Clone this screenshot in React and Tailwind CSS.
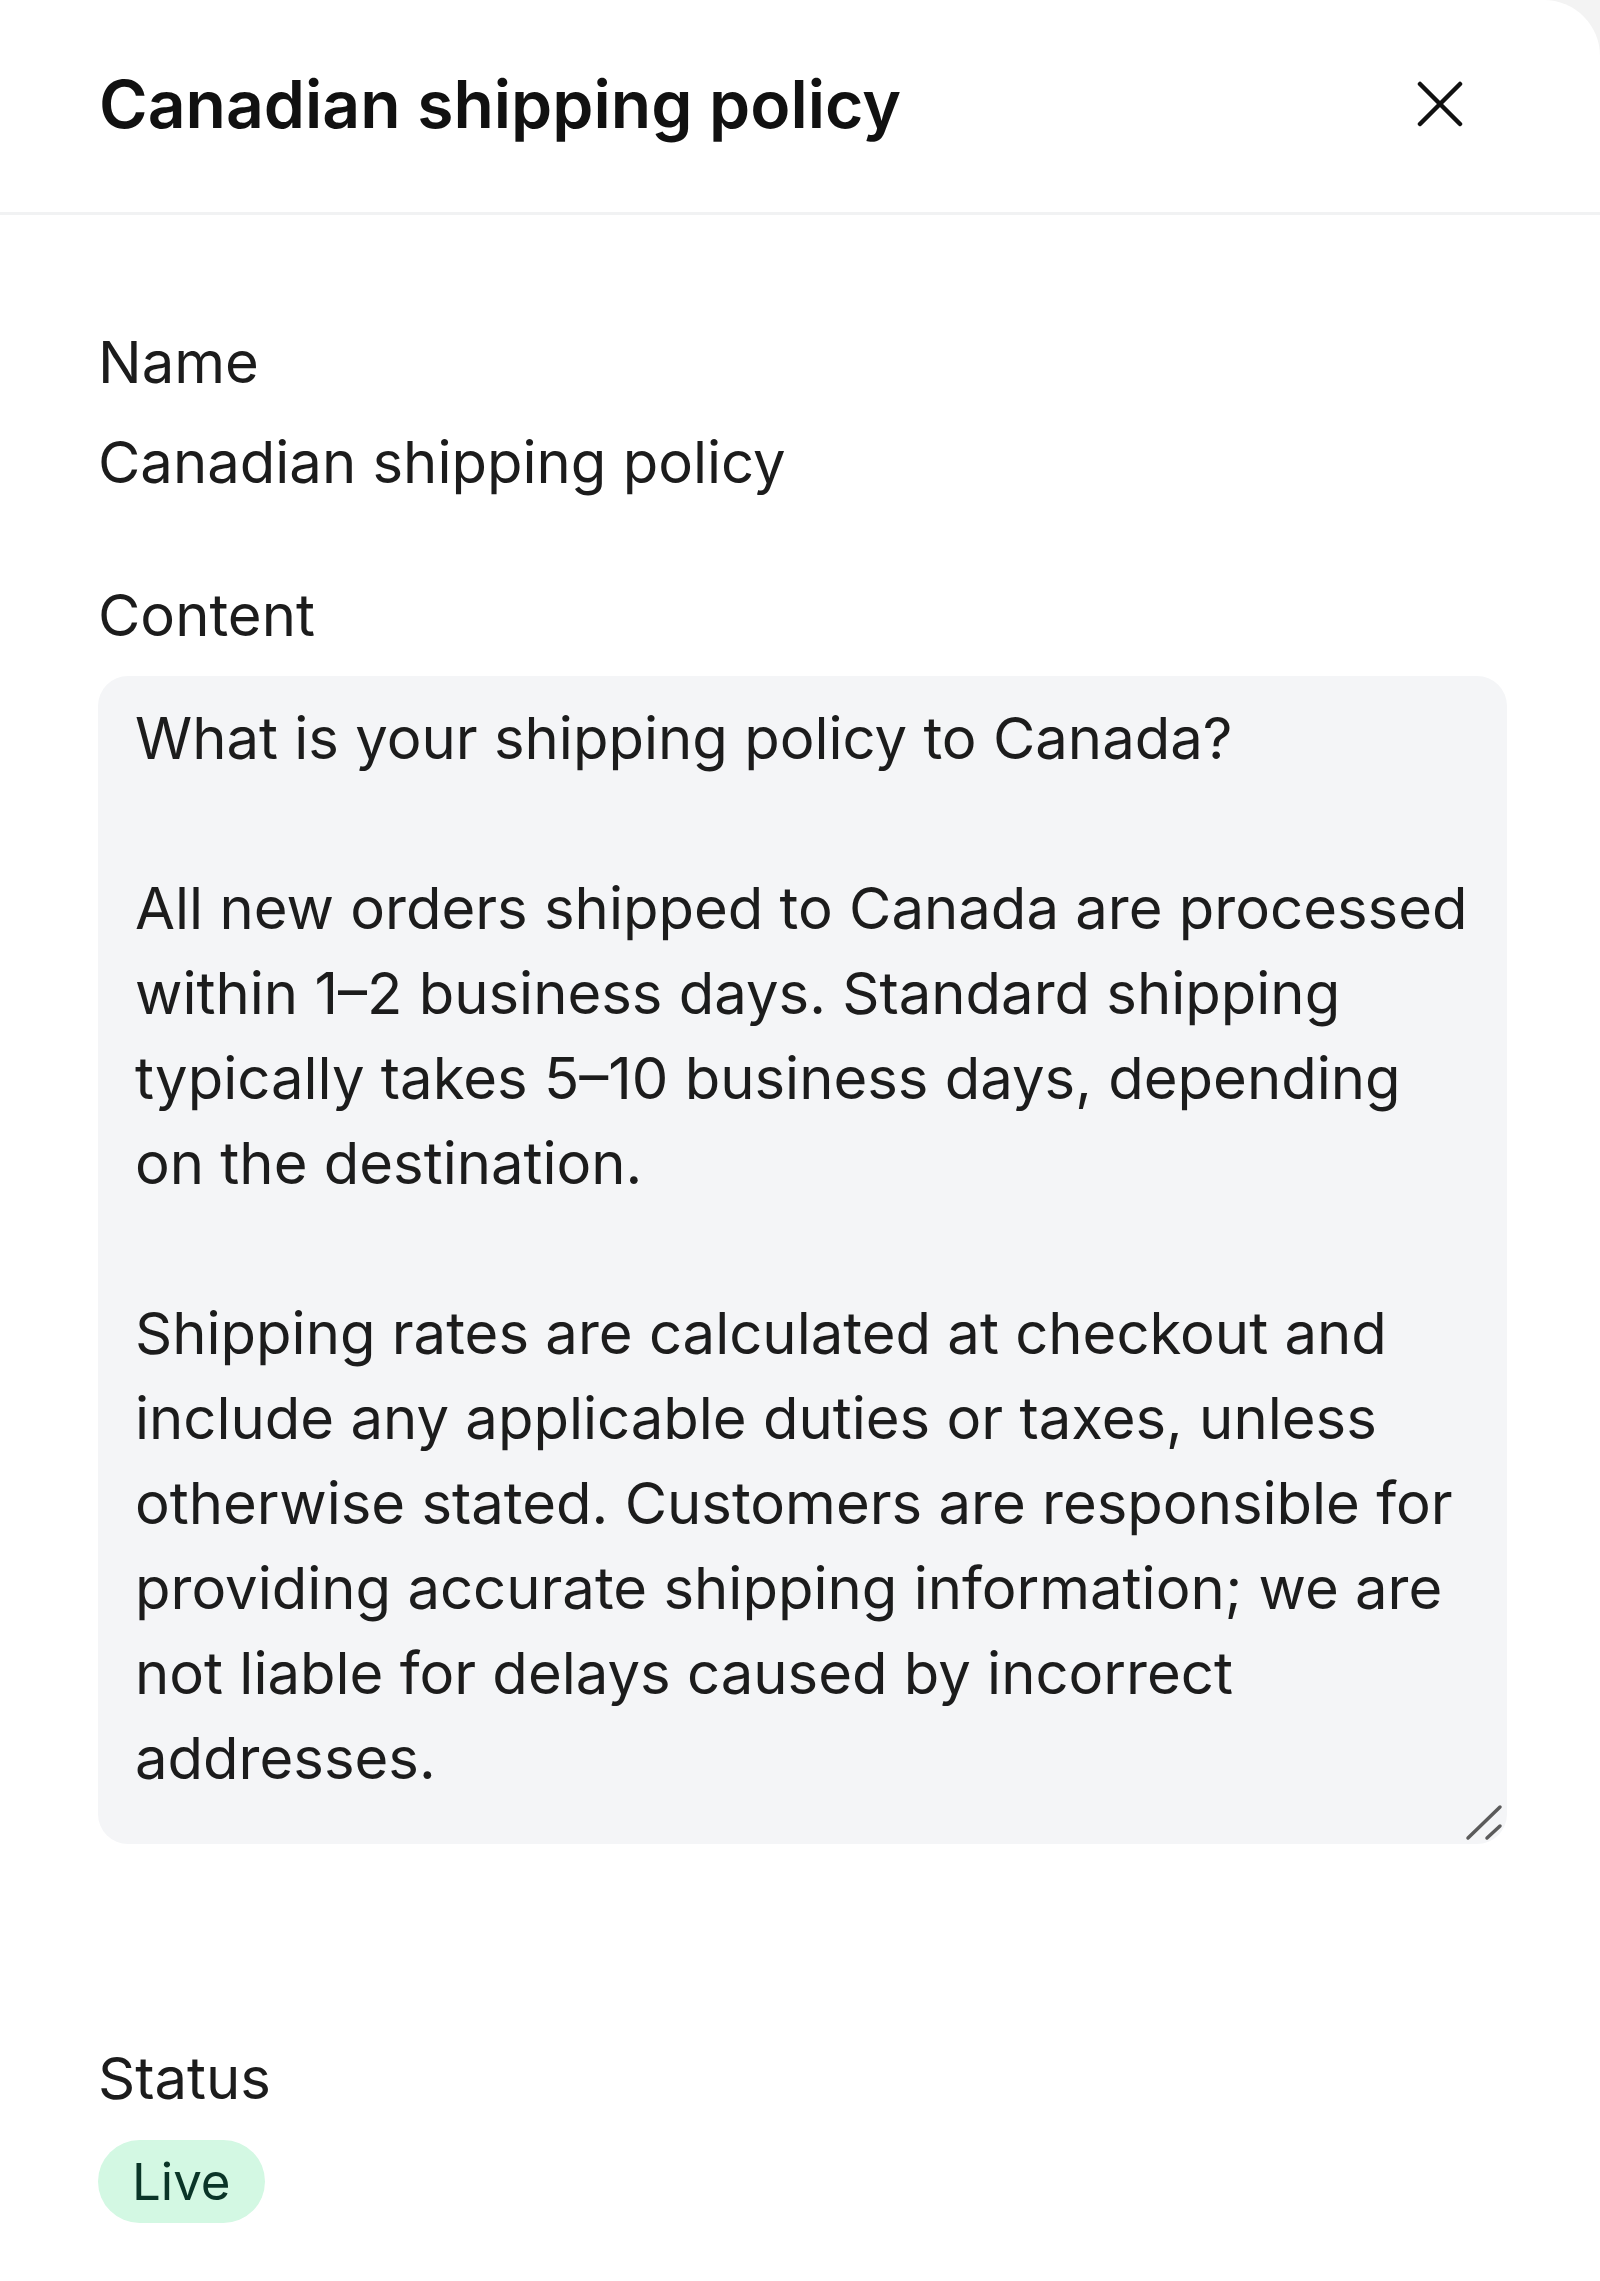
import React from 'react';

const policyText = [
  'What is your shipping policy to Canada?',
  '',
  'All new orders shipped to Canada are processed',
  'within 1–2 business days. Standard shipping',
  'typically takes 5–10 business days, depending',
  'on the destination.',
  '',
  'Shipping rates are calculated at checkout and',
  'include any applicable duties or taxes, unless',
  'otherwise stated. Customers are responsible for',
  'providing accurate shipping information; we are',
  'not liable for delays caused by incorrect',
  'addresses.',
].join('\n');

function CloseIcon() {
  return (
    <svg width="46" height="46" viewBox="0 0 46 46" fill="none" stroke="#111111" strokeWidth="4.5" strokeLinecap="round">
      <path d="M3 3 L43 43" />
      <path d="M43 3 L3 43" />
    </svg>
  );
}

function ResizeGrip() {
  return (
    <svg className="absolute right-0 bottom-0 pointer-events-none" width="44" height="44" viewBox="0 0 44 44" fill="none" stroke="#5b5b5b" strokeWidth="3.5" strokeLinecap="round">
      <path d="M5 38 L37 7" />
      <path d="M24 38 L37 26" />
    </svg>
  );
}

export default function App() {
  return (
    <div className="min-h-screen bg-[#f3f3f3] font-['Inter','Liberation_Sans',sans-serif]">
      <div className="min-h-screen bg-white rounded-tr-[56px]">
        {/* Header */}
        <div className="flex items-center justify-between h-[215px] pl-[99px] pr-[137px] pb-[5px] border-b-[3px] border-[#f1f2f3]">
          <h2 className="text-[66px] leading-[78px] font-semibold text-[#111111]">Canadian shipping policy</h2>
          <button className="flex items-center justify-center">
            <CloseIcon />
          </button>
        </div>

        {/* Body */}
        <div className="pt-[105px] pl-[98px] pr-[93px] pb-[60px] text-[#1c1c1c]">
          <div className="flex flex-col gap-[15px]">
            <label className="text-[58px] leading-[85px]">Name</label>
            <p className="text-[58px] leading-[85px]">Canadian shipping policy</p>
          </div>

          <div className="mt-[68px] flex flex-col gap-[18px]">
            <label className="text-[58px] leading-[85px]">Content</label>
            <div className="relative">
              <textarea
                readOnly
                wrap="off"
                value={policyText}
                className="block w-full h-[1168px] resize-none overflow-hidden rounded-[30px] bg-[#f4f5f7] pt-[20px] pl-[37px] pr-[30px] text-[58px] leading-[85px] text-[#1c1c1c] outline-none"
              />
              <ResizeGrip />
            </div>
          </div>

          <div className="mt-[192px] flex flex-col gap-[19px] items-start">
            <label className="text-[58px] leading-[85px]">Status</label>
            <span className="inline-flex items-center h-[83px] px-[34px] rounded-full bg-[#d3f8e3] text-[#0a3528] text-[51px] leading-none">Live</span>
          </div>
        </div>
      </div>
    </div>
  );
}
